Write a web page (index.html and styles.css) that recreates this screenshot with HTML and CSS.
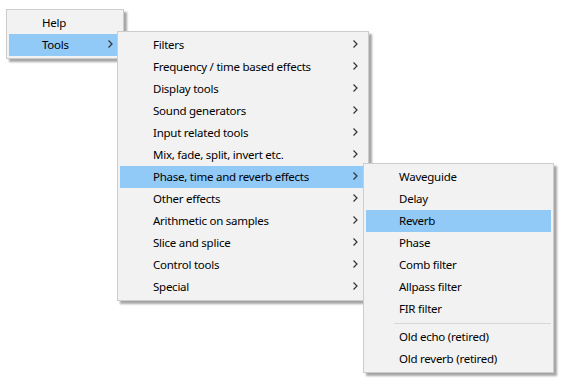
FILE: index.html
```html
<!DOCTYPE html>
<html lang="en">
<head>
    <meta charset="UTF-8">
    <title>Tools menu</title>
    <link rel="stylesheet" href="styles.css">
</head>
<body>
    <div class="menu menu-main">
        <div class="item">Help</div>
        <div class="item active">Tools <svg class="arrow" width="5" height="8" viewBox="0 0 5 8"><path d="M0.5 0.5 L4 4 L0.5 7.5"/></svg></div>
    </div>

    <div class="menu menu-tools">
        <div class="item">Filters <svg class="arrow" width="5" height="8" viewBox="0 0 5 8"><path d="M0.5 0.5 L4 4 L0.5 7.5"/></svg></div>
        <div class="item">Frequency / time based effects <svg class="arrow" width="5" height="8" viewBox="0 0 5 8"><path d="M0.5 0.5 L4 4 L0.5 7.5"/></svg></div>
        <div class="item">Display tools <svg class="arrow" width="5" height="8" viewBox="0 0 5 8"><path d="M0.5 0.5 L4 4 L0.5 7.5"/></svg></div>
        <div class="item">Sound generators <svg class="arrow" width="5" height="8" viewBox="0 0 5 8"><path d="M0.5 0.5 L4 4 L0.5 7.5"/></svg></div>
        <div class="item">Input related tools <svg class="arrow" width="5" height="8" viewBox="0 0 5 8"><path d="M0.5 0.5 L4 4 L0.5 7.5"/></svg></div>
        <div class="item">Mix, fade, split, invert etc. <svg class="arrow" width="5" height="8" viewBox="0 0 5 8"><path d="M0.5 0.5 L4 4 L0.5 7.5"/></svg></div>
        <div class="item active">Phase, time and reverb effects <svg class="arrow" width="5" height="8" viewBox="0 0 5 8"><path d="M0.5 0.5 L4 4 L0.5 7.5"/></svg></div>
        <div class="item">Other effects <svg class="arrow" width="5" height="8" viewBox="0 0 5 8"><path d="M0.5 0.5 L4 4 L0.5 7.5"/></svg></div>
        <div class="item">Arithmetic on samples <svg class="arrow" width="5" height="8" viewBox="0 0 5 8"><path d="M0.5 0.5 L4 4 L0.5 7.5"/></svg></div>
        <div class="item">Slice and splice <svg class="arrow" width="5" height="8" viewBox="0 0 5 8"><path d="M0.5 0.5 L4 4 L0.5 7.5"/></svg></div>
        <div class="item">Control tools <svg class="arrow" width="5" height="8" viewBox="0 0 5 8"><path d="M0.5 0.5 L4 4 L0.5 7.5"/></svg></div>
        <div class="item">Special <svg class="arrow" width="5" height="8" viewBox="0 0 5 8"><path d="M0.5 0.5 L4 4 L0.5 7.5"/></svg></div>
    </div>

    <div class="menu menu-effects">
        <div class="item">Waveguide</div>
        <div class="item">Delay</div>
        <div class="item active">Reverb</div>
        <div class="item">Phase</div>
        <div class="item">Comb filter</div>
        <div class="item">Allpass filter</div>
        <div class="item">FIR filter</div>
        <div class="separator"></div>
        <div class="item">Old echo (retired)</div>
        <div class="item">Old reverb (retired)</div>
    </div>
</body>
</html>
```

FILE: styles.css
```css
body {
    margin: 0;
    background-color: #fff;
    font-family: "Noto Sans", "Open Sans", sans-serif;
    font-size: 11.5px;
    letter-spacing: -0.25px;
    color: #000;
}
.menu {
    position: absolute;
    box-sizing: border-box;
    padding: 2px;
    background-color: #f2f2f2;
    border: 1px solid #cccccc;
    box-shadow: 3px 3px 2px rgba(0, 0, 0, 0.35);
}
.menu-main {
    left: 6px;
    top: 9px;
    width: 118px;
    z-index: 1;
}
.menu-tools {
    left: 117px;
    top: 31px;
    width: 252px;
    z-index: 2;
}
.menu-effects {
    left: 363px;
    top: 163px;
    width: 191px;
    z-index: 3;
}
.item {
    box-sizing: border-box;
    height: 22px;
    display: flex;
    align-items: center;
    justify-content: space-between;
    padding: 0 8px 2px 33px;
    white-space: nowrap;
}
.item.active {
    background-color: #91c9f7;
}
.arrow {
    flex: none;
}
.arrow path {
    fill: none;
    stroke: #333;
    stroke-width: 1.2;
}
.separator {
    height: 6px;
    margin-left: 28px;
    display: flex;
    align-items: center;
}
.separator::before {
    content: "";
    flex: 1;
    height: 1px;
    background-color: #d7d7d7;
}
```
